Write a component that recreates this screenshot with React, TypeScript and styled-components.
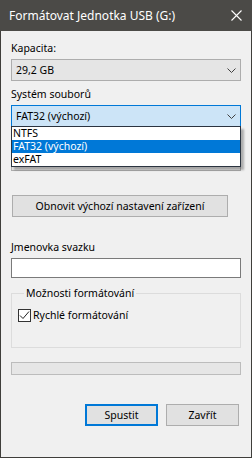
import React from 'react';
import styled, { createGlobalStyle } from 'styled-components';

const GlobalStyle = createGlobalStyle`
  html, body {
    margin: 0;
    padding: 0;
    background: #f0f0f0;
  }
  * {
    box-sizing: border-box;
  }
`;

const fileSystems = ['NTFS', 'FAT32 (výchozí)', 'exFAT'];

const Chevron: React.FC = () => (
  <svg width="9" height="5" viewBox="0 0 9 5">
    <path d="M0.5 0.5 L4.5 4.5 L8.5 0.5" fill="none" stroke="#404040" strokeWidth="1" />
  </svg>
);

const App: React.FC = () => {
  return (
    <Window>
      <GlobalStyle />
      <TitleBar>
        <Title>Formátovat Jednotka USB (G:)</Title>
        <CloseButton>
          <svg width="11" height="11" viewBox="0 0 11 11">
            <path d="M0.5 0.5 L10.5 10.5 M10.5 0.5 L0.5 10.5" stroke="#ffffff" strokeWidth="1.1" />
          </svg>
        </CloseButton>
      </TitleBar>

      <Body>
        <Label>Kapacita:</Label>
        <Combo>
          <span>29,2 GB</span>
          <Chevron />
        </Combo>

        <Label $top={5}>Systém souborů</Label>
        <ComboWrap>
          <Combo $focused>
            <span>FAT32 (výchozí)</span>
            <Chevron />
          </Combo>
          <DropList>
            {fileSystems.map((fs) => (
              <ListItem key={fs} $selected={fs === 'FAT32 (výchozí)'}>
                {fs}
              </ListItem>
            ))}
          </DropList>
        </ComboWrap>

        {/* allocation size row, covered by the open list */}
        <Label $top={3} />
        <Combo />

        <ResetButton>Obnovit výchozí nastavení zařízení</ResetButton>

        <Label $top={22}>Jmenovka svazku</Label>
        <TextInput />

        <GroupBox>
          <Legend>Možnosti formátování</Legend>
          <CheckRow>
            <CheckBox>
              <svg width="11" height="11" viewBox="0 0 11 11">
                <path d="M1 5.5 L4 8.5 L10 1.5" fill="none" stroke="#222" strokeWidth="1" />
              </svg>
            </CheckBox>
            <span>Rychlé formátování</span>
          </CheckRow>
        </GroupBox>

        <Progress />

        <Footer>
          <DialogButton $default>Spustit</DialogButton>
          <DialogButton>Zavřít</DialogButton>
        </Footer>
      </Body>
    </Window>
  );
};

const Window = styled.div`
  width: 252px;
  height: 458px;
  display: flex;
  flex-direction: column;
  background: #f0f0f0;
  border: 1px solid #3f3e3b;
  border-top: none;
  font-family: 'Noto Sans', 'Open Sans', sans-serif;
  font-size: 10.5px;
  color: #000;
`;

const TitleBar = styled.div`
  height: 31px;
  margin: 0 -1px;
  background: #4b4a47;
  display: flex;
  align-items: center;
  justify-content: space-between;
  padding: 0 10px 0 9px;
`;

const Title = styled.span`
  color: #ffffff;
  font-size: 12px;
`;

const CloseButton = styled.div`
  display: flex;
  align-items: center;
`;

const Body = styled.div`
  display: flex;
  flex-direction: column;
  padding: 9px 10px 0 10px;
`;

const Label = styled.div<{ $top?: number }>`
  height: 16px;
  line-height: 16px;
  margin-top: ${(p) => p.$top ?? 0}px;
  margin-bottom: 3px;
`;

const ComboWrap = styled.div`
  position: relative;
`;

const Combo = styled.div<{ $focused?: boolean }>`
  height: 22px;
  display: flex;
  align-items: center;
  justify-content: space-between;
  padding: 0 4px 0 4px;
  background: ${(p) => (p.$focused ? '#cce4f7' : '#e5e5e5')};
  border: 1px solid ${(p) => (p.$focused ? '#0078d7' : '#adadad')};
`;

const DropList = styled.div`
  position: absolute;
  left: 0;
  right: 0;
  top: 21px;
  background: #ffffff;
  border: 1px solid #2b3440;
  box-shadow: 3px 3px 2px rgba(0, 0, 0, 0.28);
  z-index: 2;
`;

const ListItem = styled.div<{ $selected?: boolean }>`
  height: 13px;
  line-height: 13px;
  overflow: hidden;
  padding-left: 1px;
  background: ${(p) => (p.$selected ? '#0078d7' : 'transparent')};
  color: ${(p) => (p.$selected ? '#ffffff' : '#000000')};
`;

const ResetButton = styled.div`
  width: 216px;
  height: 22px;
  margin: 24px 0 0 1px;
  display: flex;
  align-items: center;
  justify-content: center;
  background: #e1e1e1;
  border: 1px solid #adadad;
`;

const TextInput = styled.div`
  height: 20px;
  background: #ffffff;
  border: 1px solid #7a7a7a;
`;

const GroupBox = styled.fieldset`
  margin: 7px 0 0 0;
  padding: 7px 0 0 6px;
  height: 63px;
  border: 1px solid #dcdcdc;
`;

const Legend = styled.legend`
  padding: 0 2px;
  margin-left: 6px;
  line-height: 16px;
`;

const CheckRow = styled.div`
  display: flex;
  align-items: center;
  gap: 2px;
  height: 14px;
`;

const CheckBox = styled.div`
  width: 13px;
  height: 13px;
  background: #ffffff;
  border: 1px solid #333333;
  display: flex;
  align-items: center;
  justify-content: center;
`;

const Progress = styled.div`
  height: 13px;
  margin-top: 14px;
  background: #e6e6e6;
  border: 1px solid #bcbcbc;
`;

const Footer = styled.div`
  display: flex;
  justify-content: flex-end;
  gap: 8px;
  margin-top: 29px;
  padding-right: 2px;
`;

const DialogButton = styled.div<{ $default?: boolean }>`
  width: 73px;
  height: 22px;
  display: flex;
  align-items: center;
  justify-content: center;
  background: #e1e1e1;
  border: ${(p) => (p.$default ? '2px solid #0078d7' : '1px solid #adadad')};
`;

export default App;
